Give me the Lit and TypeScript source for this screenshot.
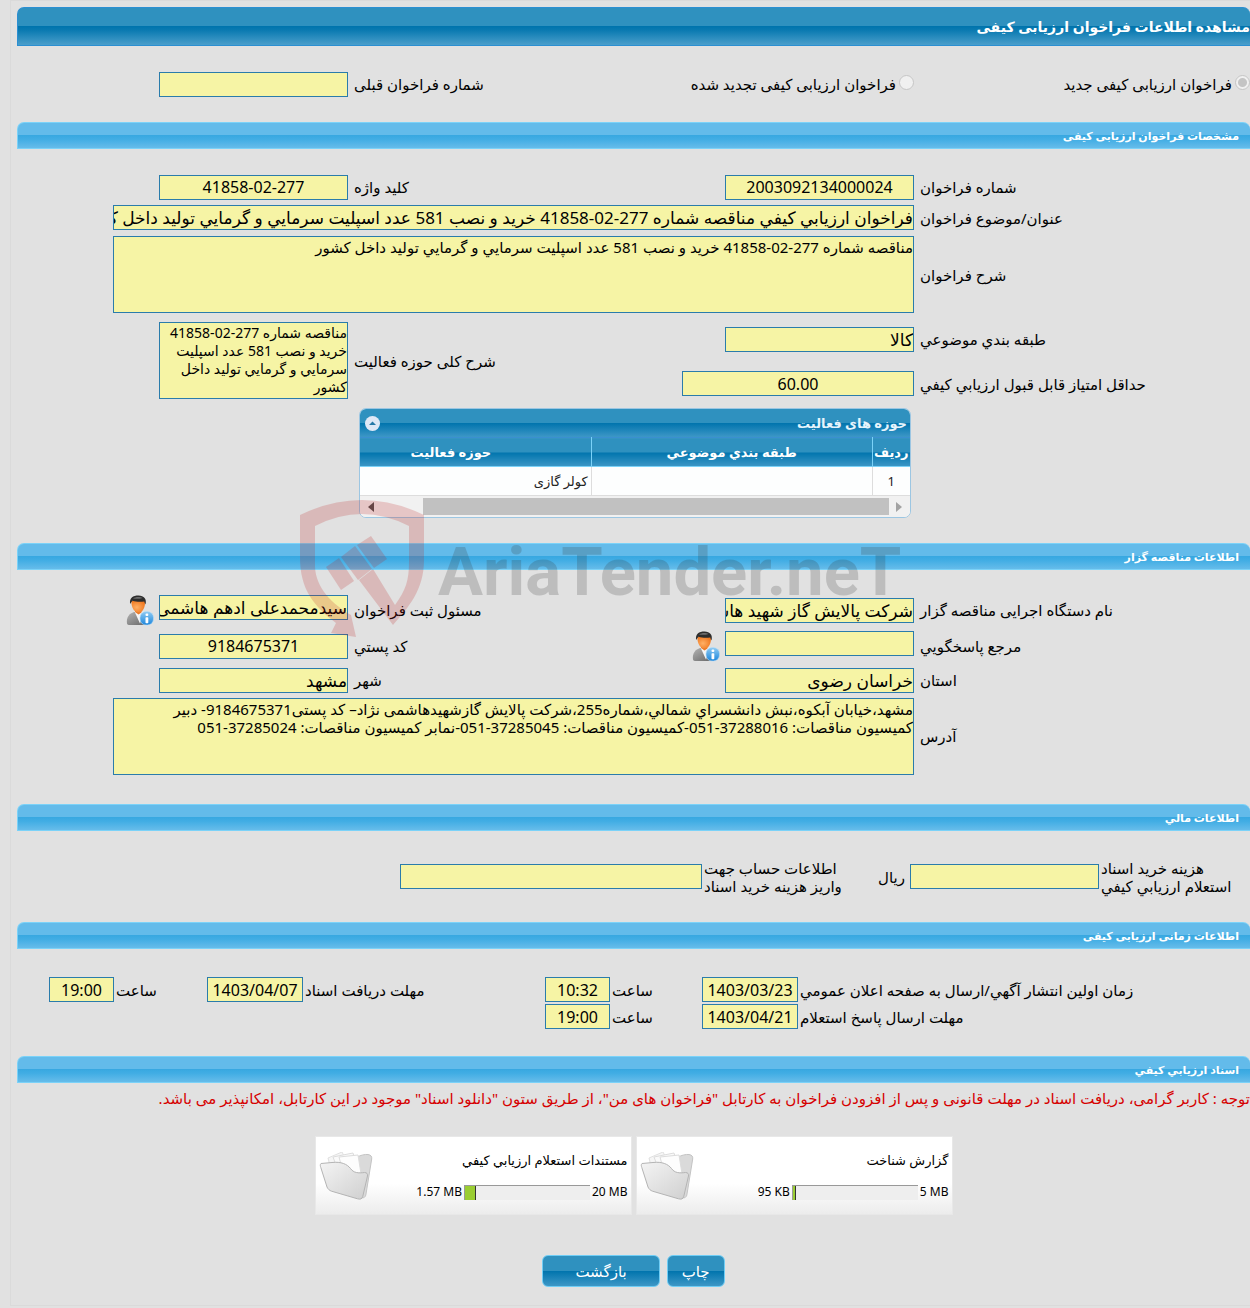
import { LitElement, html, css, svg, nothing } from "lit";
import { customElement, state } from "lit/decorators.js";

interface FileCard {
  name: string;
  limit: string;
  used: string;
  percent: number;
}

const FILES: FileCard[] = [
  { name: "گزارش شناخت", limit: "5 MB", used: "95 KB", percent: 2 },
  { name: "مستندات استعلام ارزیابي کیفي", limit: "20 MB", used: "1.57 MB", percent: 8 },
];

const personIcon = html`<svg class="person" viewBox="0 0 28 31" aria-hidden="true">
  <defs>
    <linearGradient id="coat" x1="0" y1="0" x2="1" y2="1">
      <stop offset="0" stop-color="#b5b5b5" /><stop offset="1" stop-color="#626262" />
    </linearGradient>
    <radialGradient id="skin" cx=".4" cy=".55" r=".6">
      <stop offset="0" stop-color="#ffb066" /><stop offset="1" stop-color="#f07a22" />
    </radialGradient>
    <linearGradient id="info" x1="0" y1="0" x2="0" y2="1">
      <stop offset="0" stop-color="#8fcbf3" /><stop offset="1" stop-color="#1d86dc" />
    </linearGradient>
  </defs>
  <path d="M1 28.500C0 22 3.500 18.500 8 17l8-.5c5 1.500 7 5 7 10.500 0 2-1.500 3-3 3H4c-1.500 0-2.800-.4-3-1.500Z" fill="url(#coat)" />
  <path d="M8.500 16.500 14 28.500l4-12Z" fill="#f6f6f6" />
  <path d="M9 14h6.500v3.500L12.500 19.500 9 17Z" fill="#e97a2a" />
  <path d="M5.500 6h13.500c.4 6-2 11.500-6.500 11.500S5 12 5.500 6Z" fill="url(#skin)" />
  <path d="M4.200 9C3 3 7 .5 12.500.5S21 4 19.500 9.500c-.8-1-1-2-1.200-3C15 7 10 7 6.500 5.800 5.500 6.800 5 8 4.200 9Z" fill="#2d2d2d" />
  <path d="M7 3.500c2.500-2 7-2 9.500-.5-3 1-6.500 1-9.500.5Z" fill="#6d6d6d" />
  <rect x="14" y="16.500" width="13.500" height="13.500" rx="6" fill="url(#info)" stroke="#b9def7" stroke-width=".6" />
  <rect x="19.500" y="18.500" width="2.800" height="2.600" rx="1" fill="#fff" />
  <rect x="19.500" y="22.300" width="2.800" height="6" rx=".8" fill="#fff" />
</svg>`;

const folderIcon = html`<svg class="folder" viewBox="0 0 54 48" aria-hidden="true">
  <defs>
    <linearGradient id="front" x1="0" y1="0" x2="1" y2="1">
      <stop offset="0" stop-color="#f4f4f4" /><stop offset="1" stop-color="#cfcfcf" />
    </linearGradient>
  </defs>
  <path d="M38 5c3-1.500 8-3 11-2.500 3 .5 4 2 3.700 4.500L47 42c-.4 3-2 4.500-5 3.500Z" fill="#dadada" stroke="#c4c4c4" />
  <path d="m9 6 14-6 14 28-20 9Z" fill="#f6f6f6" stroke="#e0e0e0" />
  <path d="m14 5 20-4 8 28-17 5Z" fill="#fafafa" stroke="#dcdcdc" />
  <path d="m20 5 19-2 5 31-15 4Z" fill="#fdfdfd" stroke="#dcdcdc" />
  <path d="M2 11.500c-1 1-.8 2.500-.2 4L8 35c.8 2 2.500 3.500 4.500 4.200l26 7.600c3 .8 4.500.3 5.300-2.500L48.500 24c.4-2-.6-3.500-3-3.500-6 .8-11 .5-14-4C28 12 22 9.500 13 10.500Z" fill="url(#front)" stroke="#b4b4b4" />
</svg>`;

const emblem = svg`
  <g fill="#be1e1e">
    <path d="M0 15Q62-15 124 15V60C124 90 108 108 93 125L59 80 73 69 95 105C106 90 109 80 109 62V26Q62 2 15 26V67C16 88 32 104 51 115L56 137 31 133 36 123C14 106 0 90 0 57Z" />
    <path d="M57 45 71 36 87 59 74 68Z" />
    <path d="M41 57 55 46 72 69 58 80Z" />
    <path d="M26 67 39 58 54 81 41 90Z" />
  </g>
`;

@customElement("app-root")
export class AppRoot extends LitElement {
  @state() private open = true;

  static styles = css`
    :host {
      display: block;
      min-height: 100vh;
      overflow: hidden;
      background: #e1e1e1;
      color: #000;
      font: 15px/18px "Noto Sans", "DejaVu Sans", sans-serif;
    }
    * {
      box-sizing: border-box;
    }
    .page {
      position: relative;
      margin-left: 10px;
      padding: 6px 0 18px 6px;
      border: 1px solid #dadada;
      border-width: 1px 0 1px 1px;
    }
    .title,
    .bar,
    .note {
      margin: 0;
      overflow: hidden;
      white-space: nowrap;
    }
    .title,
    .bar {
      display: flex;
      align-items: center;
      color: #fff;
      font-weight: bold;
      border-radius: 7px 7px 0 0;
    }
    .title {
      height: 39px;
      font-size: 14px;
      border: 1px solid #2b8fd2;
      border-right: 0;
      background: linear-gradient(#2f91bf 50%, #0074ad 50%, #0a7ab1 60%, #4a9ecb);
    }
    .bar {
      height: 27px;
      padding: 0 11px;
      font-size: 11px;
      border: 1px solid #7bd2f8;
      border-right: 0;
      background: linear-gradient(#63bbea 48%, #38a8e1 50%, #41ade4 65%, #66bcea);
    }
    .grid {
      display: grid;
      grid-template-columns:
        minmax(0, 336fr) minmax(0, 354fr) minmax(0, 212fr)
        minmax(0, 331fr);
      align-items: center;
    }
    .choice {
      height: 76px;
    }
    .specs {
      grid-template-rows: 30px 31px 83px 46px 43px;
      padding: 23px 0 3px;
    }
    .agency {
      grid-template-rows: 36px 36px 32px 80px;
      padding: 22px 0 28px;
    }
    .label {
      padding-left: 6px;
      text-align: left;
      white-space: nowrap;
    }
    .tight {
      padding-left: 2px;
    }
    .radio {
      display: flex;
      align-items: center;
      gap: 3px;
      white-space: nowrap;
    }
    .radio input {
      appearance: none;
      width: 15px;
      height: 15px;
      margin: 0 0 4px;
      border: 1px solid #c6c6c6;
      border-radius: 50%;
      background: #f0f0f0;
    }
    .radio input:checked {
      background: radial-gradient(#c4c4c4 4px, #f0f0f0 5px);
    }
    .box {
      display: block;
      width: 189px;
      height: 25px;
      margin: 0;
      padding: 0;
      border: 1px solid #2a7cab;
      border-radius: 0;
      outline: 0;
      background: #f6f4a5;
      color: #000;
      font: 17px/22px "Noto Sans", "DejaVu Sans", sans-serif;
      text-align: right;
    }
    .num {
      font-size: 16px;
      text-align: center;
    }
    .score {
      width: 232px;
    }
    .account {
      width: 302px;
    }
    .date {
      width: 96px;
    }
    .time {
      width: 65px;
    }
    .area {
      height: 77px;
      padding: 1px 0;
      resize: none;
      overflow: hidden;
      font-size: 15px;
      line-height: 18px;
    }
    .span {
      grid-column: 2 / 5;
      width: calc(100% - 96px);
    }
    .tall {
      grid-row: 4 / 6;
      grid-column: 4;
      font-size: 14px;
    }
    .tall-label {
      grid-row: 4 / 6;
      grid-column: 3;
    }
    .with-icon {
      display: flex;
      align-items: flex-start;
      gap: 5px;
    }
    .person {
      width: 28px;
      height: 31px;
    }
    .panel {
      width: 552px;
      margin: 0 339px 25px 0;
      overflow: hidden;
      border: 1px solid #9cc6e2;
      border-radius: 7px;
      background: #fdfefe;
    }
    .panel-head {
      display: flex;
      align-items: center;
      justify-content: space-between;
      height: 28px;
      padding: 0 3px 0 5px;
      color: #e6f4fc;
      font-size: 13px;
      font-weight: bold;
      background: linear-gradient(#2f91bf 50%, #0074ad 50%, #3d97c6);
    }
    .toggle {
      width: 15px;
      height: 15px;
      padding: 0;
      border: 0;
      border-radius: 50%;
      background: #dfe8f6;
    }
    .toggle svg,
    .arrow {
      display: block;
    }
    .scroller {
      overflow: hidden;
    }
    .table {
      width: 600px;
      table-layout: fixed;
      border-collapse: collapse;
    }
    .c1 {
      width: 38px;
    }
    .table th {
      height: 29px;
      padding: 0;
      color: #fff;
      font-size: 13px;
      border-left: 1px solid #7bd2f8;
      border-top: 1px solid #3a8fd0;
      border-bottom: 1px solid #7bd2f8;
      background: linear-gradient(#2f91bf 50%, #0074ad 50%, #3d97c6);
    }
    .table td {
      height: 29px;
      padding: 0 3px;
      font-size: 13px;
      color: #222;
      border-left: 1px solid #ddd;
      border-bottom: 1px solid #ddd;
    }
    .table .idx {
      text-align: center;
    }
    .track {
      display: flex;
      align-items: center;
      justify-content: space-between;
      height: 21px;
      padding: 0 8px;
      background: #f1f1f1;
    }
    .thumb {
      flex: 0 0 466px;
      height: 17px;
      margin-left: auto;
      margin-right: 7px;
      background: #c1c1c1;
    }
    .finance {
      grid-template-columns:
        minmax(0, 151fr) minmax(0, 257fr) minmax(0, 140fr)
        minmax(0, 685fr);
      height: 91px;
    }
    .unit {
      display: flex;
      align-items: center;
      gap: 5px;
    }
    .times {
      grid-template-columns:
        minmax(0, 452fr) minmax(0, 138fr) minmax(0, 50fr) minmax(0, 170fr)
        minmax(0, 137fr) minmax(0, 138fr) minmax(0, 51fr) minmax(0, 97fr);
      row-gap: 2px;
      padding: 28px 0 27px;
    }
    .note {
      height: 32px;
      color: #d60000;
      line-height: 30px;
    }
    .cards,
    .actions {
      display: flex;
      justify-content: center;
    }
    .cards {
      gap: 4px;
      padding: 21px 0 40px;
    }
    .card {
      display: flex;
      justify-content: space-between;
      align-items: center;
      width: 317px;
      height: 79px;
      padding: 0 3px;
      border: 1px solid #e8e8e8;
      background: linear-gradient(#fff 60%, #ececec);
      font-size: 13px;
    }
    .info {
      display: grid;
      gap: 14px;
    }
    .usage {
      display: flex;
      gap: 2px;
      font-size: 12px;
    }
    .meter {
      direction: ltr;
      width: 126px;
      height: 15px;
      margin-top: 2px;
      border-top: 1px solid #999;
      border-left: 1px solid #999;
      background: #eee;
    }
    .fill {
      height: 100%;
      box-sizing: content-box;
      border-right: 1px solid #333;
      background: #9acd32;
    }
    .folder {
      width: 54px;
      height: 48px;
    }
    .actions {
      gap: 7px;
    }
    .btn {
      height: 32px;
      padding: 0 14px;
      border: 1px solid #6fcdf5;
      border-radius: 6px;
      color: #fff;
      font: 15px/18px "Noto Sans", "DejaVu Sans", sans-serif;
      background: linear-gradient(#2f91bf 50%, #0074ad 50%, #3d97c6);
    }
    .wide {
      padding: 0 32px;
    }
    .mark {
      position: absolute;
      left: 289px;
      top: 499px;
      display: flex;
      align-items: flex-start;
      gap: 12px;
      direction: ltr;
      opacity: 0.2;
      pointer-events: none;
    }
    .mark-art {
      width: 126px;
      height: 140px;
      overflow: visible;
    }
    .mark-text {
      padding-top: 32px;
      color: #333;
      font: bold 67px/80px Roboto, "Liberation Sans", sans-serif;
      white-space: nowrap;
    }
  `;

  private label(id: string, text: string, cls = "") {
    return html`<label class="label ${cls}" for=${id}>${text}</label>`;
  }

  private box(id: string, value: string, cls = "") {
    return html`<input class="box ${cls}" id=${id} type="text" readonly .value=${value} />`;
  }

  private field(id: string, text: string, value: string, cls = "") {
    return html`${this.label(id, text)}${this.box(id, value, cls)}`;
  }

  private area(id: string, value: string, cls: string) {
    return html`<textarea class="box area ${cls}" id=${id} readonly .value=${value}></textarea>`;
  }

  private moment(id: string, text: string, value: string, cls: string) {
    return html`${this.label(id, text, "tight")}${this.box(id, value, cls)}`;
  }

  render() {
    return html`<main class="page" dir="rtl" lang="fa">
      <h1 class="title">مشاهده اطلاعات فراخوان ارزیابی کیفی</h1>

      <div class="grid choice">
        <label class="radio"><input type="radio" name="kind" checked disabled />فراخوان ارزیابی کیفی جدید</label>
        <label class="radio"><input type="radio" name="kind" disabled />فراخوان ارزیابی کیفی تجدید شده</label>
        ${this.field("prev", "شماره فراخوان قبلی", "")}
      </div>

      <h2 class="bar">مشخصات فراخوان ارزیابی کیفی</h2>
      <div class="grid specs">
        ${this.field("number", "شماره فراخوان", "2003092134000024", "num")}
        ${this.field("keyword", "کلید واژه", "41858-02-277", "num")}
        ${this.field("subject", "عنوان/موضوع فراخوان", "فراخوان ارزيابي کيفي مناقصه شماره 277-02-41858 خريد و نصب 581 عدد اسپليت سرمايي و گرمايي توليد داخل کشور", "span")}
        ${this.label("desc", "شرح فراخوان")}
        ${this.area("desc", "مناقصه شماره 277-02-41858 خريد و نصب 581 عدد اسپليت سرمايي و گرمايي توليد داخل کشور", "span")}
        ${this.field("class", "طبقه بندي موضوعي", "کالا")}
        ${this.label("scope", "شرح کلی حوزه فعالیت", "tall-label")}
        ${this.area("scope", "مناقصه شماره 277-02-41858 خريد و نصب 581 عدد اسپليت سرمايي و گرمايي توليد داخل کشور", "tall")}
        ${this.field("score", "حداقل امتیاز قابل قبول ارزیابي کیفي", "60.00", "num score")}
      </div>

      <section class="panel">
        <div class="panel-head">
          <span>حوزه های فعالیت</span>
          <button class="toggle" type="button" aria-label="حوزه های فعالیت" aria-expanded=${this.open} @click=${() => (this.open = !this.open)}>
            <svg width="15" height="15" viewBox="0 0 15 15"><path d="M4 9 7.500 5.500 11 9Z" fill="#2779a8" /></svg>
          </button>
        </div>
        ${this.open
          ? html`<div class="scroller">
                <table class="table">
                  <thead>
                    <tr><th class="c1">ردیف</th><th>طبقه بندي موضوعي</th><th>حوزه فعالیت</th></tr>
                  </thead>
                  <tbody>
                    <tr><td class="idx">1</td><td></td><td>کولر گازی</td></tr>
                  </tbody>
                </table>
              </div>
              <div class="track">
                <svg class="arrow" width="6" height="10"><path d="M0 0 6 5 0 10Z" fill="#a3a3a3" /></svg>
                <div class="thumb"></div>
                <svg class="arrow" width="6" height="10"><path d="M6 0 0 5 6 10Z" fill="#505050" /></svg>
              </div>`
          : nothing}
      </section>

      <h2 class="bar">اطلاعات مناقصه گزار</h2>
      <div class="grid agency">
        ${this.field("org", "نام دستگاه اجرایی مناقصه گزار", "شرکت پالایش گاز شهید هاشمی نژاد")}
        ${this.label("owner", "مسئول ثبت فراخوان")}
        <div class="with-icon">${this.box("owner", "سیدمحمدعلی ادهم هاشمی")}${personIcon}</div>
        ${this.label("contact", "مرجع پاسخگويي")}
        <div class="with-icon">${this.box("contact", "")}${personIcon}</div>
        ${this.field("zip", "کد پستي", "9184675371", "num")}
        ${this.field("province", "استان", "خراسان رضوی")}
        ${this.field("city", "شهر", "مشهد")}
        ${this.label("address", "آدرس")}
        ${this.area("address", "مشهد،خیابان آبکوه،نبش دانشسراي شمالي،شماره255،شرکت پالایش گازشهیدهاشمی نژاد– کد پستی9184675371- دبیر کمیسیون مناقصات: 37288016-051-کمیسیون مناقصات: 37285045-051-نمابر کمیسیون مناقصات: 37285024-051", "span")}
      </div>

      <h2 class="bar">اطلاعات مالي</h2>
      <div class="grid finance">
        <label class="label tight" for="fee">هزینه خرید اسناد<br />استعلام ارزیابي کیفي</label>
        <div class="unit">${this.box("fee", "", "num")}<span>ریال</span></div>
        <label class="label tight" for="account">اطلاعات حساب جهت<br />واریز هزینه خرید اسناد</label>
        ${this.box("account", "", "account")}
      </div>

      <h2 class="bar">اطلاعات زمانی ارزیابی کیفی</h2>
      <div class="grid times">
        ${this.moment("pub", "زمان اولین انتشار آگهي/ارسال به صفحه اعلان عمومي", "1403/03/23", "num date")}
        ${this.moment("pubt", "ساعت", "10:32", "num time")}
        ${this.moment("doc", "مهلت دریافت اسناد", "1403/04/07", "num date")}
        ${this.moment("doct", "ساعت", "19:00", "num time")}
        ${this.moment("ans", "مهلت ارسال پاسخ استعلام", "1403/04/21", "num date")}
        ${this.moment("anst", "ساعت", "19:00", "num time")}
      </div>

      <h2 class="bar">اسناد ارزيابي کيفي</h2>
      <p class="note">توجه : کاربر گرامی، دریافت اسناد در مهلت قانونی و پس از افزودن فراخوان به کارتابل "فراخوان های من"، از طریق ستون "دانلود اسناد" موجود در این کارتابل، امکانپذیر می باشد.</p>

      <div class="cards">
        ${FILES.map(
          (f) => html`<article class="card">
            <div class="info">
              <span>${f.name}</span>
              <div class="usage">
                <bdi dir="ltr">${f.limit}</bdi>
                <div class="meter"><div class="fill" style="width:${f.percent}%"></div></div>
                <bdi dir="ltr">${f.used}</bdi>
              </div>
            </div>
            ${folderIcon}
          </article>`
        )}
      </div>

      <div class="actions">
        <button class="btn" type="button">چاپ</button>
        <button class="btn wide" type="button">بازگشت</button>
      </div>

      <div class="mark" aria-hidden="true">
        <svg class="mark-art" viewBox="0 0 126 140">${emblem}</svg>
        <span class="mark-text">AriaTender.neT</span>
      </div>
    </main>`;
  }
}
